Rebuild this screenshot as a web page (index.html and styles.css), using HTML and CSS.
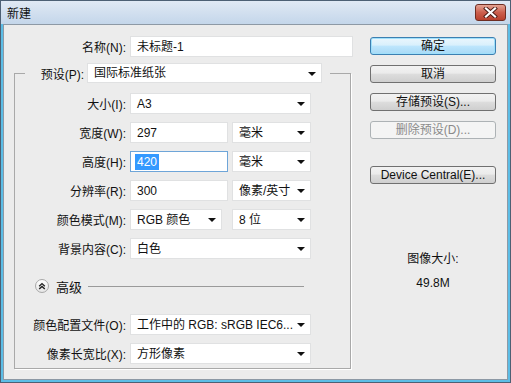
FILE: index.html
```html
<!DOCTYPE html>
<html lang="zh-CN">
<head>
    <meta charset="UTF-8">
    <title>新建</title>
    <link rel="stylesheet" href="styles.css">
</head>
<body>
    <div class="window">
        <div class="titlebar">
            <span class="title">新建</span>
            <div class="close">
                <svg width="15" height="11" viewBox="0 0 15 11">
                    <path d="M3 1.5 L12 9.5 M12 1.5 L3 9.5" stroke="#4a1a14" stroke-width="4" stroke-linecap="square"/>
                    <path d="M3 1.5 L12 9.5 M12 1.5 L3 9.5" stroke="#ffffff" stroke-width="2.2" stroke-linecap="square"/>
                </svg>
            </div>
        </div>

        <div class="content">
            <div class="main">
                <div class="name-row">
                    <label>名称(N):</label>
                    <div class="field name">未标题-1</div>
                </div>

                <fieldset class="group">
                    <legend>
                        <div class="legend-inner">
                            <label>预设(P):</label>
                            <div class="field select preset">国际标准纸张<span class="arrow"></span></div>
                        </div>
                    </legend>

                    <div class="row">
                        <label>大小(I):</label>
                        <div class="field select full">A3<span class="arrow"></span></div>
                    </div>
                    <div class="row">
                        <label>宽度(W):</label>
                        <div class="field num">297</div>
                        <div class="field select unit">毫米<span class="arrow"></span></div>
                    </div>
                    <div class="row">
                        <label>高度(H):</label>
                        <div class="field num focus"><span class="sel">420</span></div>
                        <div class="field select unit">毫米<span class="arrow"></span></div>
                    </div>
                    <div class="row">
                        <label>分辨率(R):</label>
                        <div class="field num">300</div>
                        <div class="field select unit">像素/英寸<span class="arrow"></span></div>
                    </div>
                    <div class="row">
                        <label>颜色模式(M):</label>
                        <div class="field select mode">RGB 颜色<span class="arrow"></span></div>
                        <div class="field select unit">8 位<span class="arrow"></span></div>
                    </div>
                    <div class="row">
                        <label>背景内容(C):</label>
                        <div class="field select full">白色<span class="arrow"></span></div>
                    </div>

                    <div class="adv">
                        <span class="toggle">
                            <svg width="14" height="14" viewBox="0 0 14 14">
                                <path d="M4.2 7.2 L7 4.6 L9.8 7.2 M4.2 10 L7 7.4 L9.8 10" fill="none" stroke="#222" stroke-width="1.4"/>
                            </svg>
                        </span>
                        <span class="adv-text">高级</span>
                        <span class="adv-line"></span>
                    </div>

                    <div class="row profile">
                        <label>颜色配置文件(O):</label>
                        <div class="field select full">工作中的 RGB: sRGB IEC6...<span class="arrow"></span></div>
                    </div>
                    <div class="row">
                        <label>像素长宽比(X):</label>
                        <div class="field select full">方形像素<span class="arrow"></span></div>
                    </div>
                </fieldset>
            </div>

            <div class="side">
                <button class="btn default">确定</button>
                <button class="btn">取消</button>
                <button class="btn">存储预设(S)...</button>
                <button class="btn" disabled>删除预设(D)...</button>
                <button class="btn device">Device Central(E)...</button>

                <div class="info">
                    <div>图像大小:</div>
                    <div class="size">49.8M</div>
                </div>
            </div>
        </div>
    </div>
</body>
</html>
```

FILE: styles.css
```css
* {
    box-sizing: border-box;
}

body {
    margin: 0;
    font-family: "Liberation Sans", "Noto Sans CJK SC", sans-serif;
    font-size: 12px;
    color: #111;
}

.window {
    width: 511px;
    height: 383px;
    border: 1px solid #4d6074;
    background: #5cbde6;
    display: flex;
    flex-direction: column;
}

.titlebar {
    height: 23px;
    display: flex;
    justify-content: space-between;
    align-items: flex-start;
    padding: 0 4px 0 6px;
    background: linear-gradient(#e0e9f4, #c4d6ea);
}

.title {
    line-height: 16px;
    margin-top: 5px;
    font-size: 12px;
}

.close {
    width: 31px;
    height: 17px;
    margin-top: 3px;
    border: 1px solid #6e2d22;
    border-radius: 3px;
    background: linear-gradient(#e4a393, #cc5f4d 50%, #b8402d);
    display: flex;
    align-items: center;
    justify-content: center;
}

.content {
    flex: 1;
    margin: 0 2px 2px;
    border: 1px solid #8d99a5;
    background: #ececec;
    display: flex;
}

.main {
    width: 356px;
    padding: 11px 0 0 10px;
}

.name-row {
    display: flex;
    align-items: center;
    gap: 4px;
    height: 21px;
}

.name-row label {
    width: 112px;
    text-align: right;
}

.field {
    height: 21px;
    background: #fff;
    border: 1px solid #e0e1e2;
    padding: 0 6px;
    display: flex;
    align-items: center;
    line-height: 16px;
    white-space: nowrap;
    position: relative;
}

.field.name {
    width: 223px;
}

.select {
    padding-right: 18px;
}

.arrow {
    position: absolute;
    right: 5px;
    top: 8px;
    width: 0;
    height: 0;
    border-left: 4px solid transparent;
    border-right: 4px solid transparent;
    border-top: 4px solid #111;
}

.group {
    width: 337px;
    min-width: 0;
    margin: 6px 0 0;
    padding: 10px 0 4px;
    border: 1px solid #a9a9a9;
    box-shadow: 1px 1px 0 #fff;
}

.group legend {
    margin-left: 10px;
    padding: 0 8px 0 0;
}

.legend-inner {
    display: flex;
    align-items: center;
    gap: 3px;
}

.legend-inner label {
    width: 59px;
    text-align: right;
}

.field.preset {
    width: 235px;
    height: 20px;
}

.row {
    display: flex;
    align-items: center;
    gap: 4px;
    height: 21px;
    margin-top: 8px;
}

.group .row:first-of-type {
    margin-top: 0;
}

.row label {
    width: 111px;
    text-align: right;
}

.field.full {
    width: 181px;
}

.field.num {
    width: 98px;
}

.field.unit {
    width: 79px;
}

.field.mode {
    width: 92px;
    margin-right: 6px;
}

.field.focus {
    border: 1px solid #6ea5d8;
    padding-left: 4px;
}

.sel {
    background: #3399ff;
    color: #fff;
    padding: 0 2px;
}

.adv {
    display: flex;
    align-items: center;
    height: 20px;
    margin-top: 17px;
    padding-left: 20px;
}

.toggle {
    width: 14px;
    height: 14px;
    border-radius: 50%;
    border: 1px solid #a8a8a8;
    background: linear-gradient(#ffffff, #e6e6e6);
    display: flex;
    align-items: center;
    justify-content: center;
}

.toggle svg {
    flex: none;
}

.adv-text {
    margin-left: 7px;
    font-size: 13px;
}

.adv-line {
    width: 216px;
    height: 1px;
    margin-left: 6px;
    background: #9a9a9a;
}

.row.profile {
    margin-top: 18px;
}

.side {
    width: 126px;
    margin-left: 10px;
    padding-top: 12px;
    display: flex;
    flex-direction: column;
}

.btn {
    height: 18px;
    margin-bottom: 10px;
    padding: 0;
    font-family: inherit;
    font-size: 12px;
    line-height: 14px;
    color: #111;
    border: 1px solid #707070;
    border-radius: 3px;
    background: linear-gradient(#f2f2f2, #ebebeb 45%, #dddddd 50%, #cfcfcf);
}

.btn.default {
    border-color: #3c7fb1;
    background: linear-gradient(#eaf6fd, #d9f0fc 45%, #bee6fd 50%, #a7d9f5);
    box-shadow: inset 0 0 0 1px #9fe0fb;
}

.btn:disabled {
    border-color: #adb2b5;
    background: #f4f4f4;
    color: #8a8a8a;
}

.btn.device {
    margin-top: 17px;
}

.info {
    margin-top: 57px;
    text-align: center;
    line-height: 16px;
}

.info .size {
    margin-top: 8px;
}
```
